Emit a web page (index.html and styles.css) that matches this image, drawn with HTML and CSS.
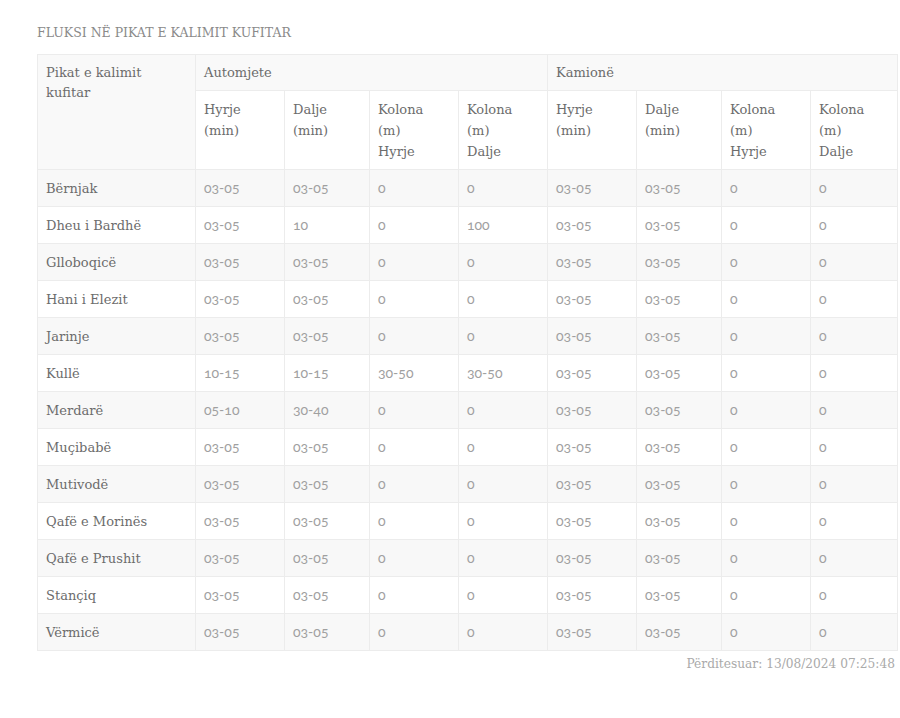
FILE: index.html
```html
<!DOCTYPE html>
<html lang="sq">
<head>
<meta charset="utf-8">
<title>Fluksi në pikat e kalimit kufitar</title>
<link rel="stylesheet" href="styles.css">
</head>
<body>
<div class="wrap">
  <h2 class="title">FLUKSI NË PIKAT E KALIMIT KUFITAR</h2>
  <table class="flux">
    <colgroup>
      <col class="c-name">
      <col class="c-a"><col class="c-b"><col class="c-a"><col class="c-a">
      <col class="c-a"><col class="c-b"><col class="c-a"><col class="c-c">
    </colgroup>
    <thead>
      <tr class="h1">
        <th rowspan="2" class="hname">Pikat e kalimit kufitar</th>
        <th colspan="4">Automjete</th>
        <th colspan="4">Kamionë</th>
      </tr>
      <tr class="h2">
        <th>Hyrje<br>(min)</th>
        <th>Dalje<br>(min)</th>
        <th>Kolona<br>(m)<br>Hyrje</th>
        <th>Kolona<br>(m)<br>Dalje</th>
        <th>Hyrje<br>(min)</th>
        <th>Dalje<br>(min)</th>
        <th>Kolona<br>(m)<br>Hyrje</th>
        <th>Kolona<br>(m)<br>Dalje</th>
      </tr>
    </thead>
    <tbody>
      <tr><th>Bërnjak</th><td>03-05</td><td>03-05</td><td>0</td><td>0</td><td>03-05</td><td>03-05</td><td>0</td><td>0</td></tr>
      <tr><th>Dheu i Bardhë</th><td>03-05</td><td>10</td><td>0</td><td>100</td><td>03-05</td><td>03-05</td><td>0</td><td>0</td></tr>
      <tr><th>Glloboqicë</th><td>03-05</td><td>03-05</td><td>0</td><td>0</td><td>03-05</td><td>03-05</td><td>0</td><td>0</td></tr>
      <tr><th>Hani i Elezit</th><td>03-05</td><td>03-05</td><td>0</td><td>0</td><td>03-05</td><td>03-05</td><td>0</td><td>0</td></tr>
      <tr><th>Jarinje</th><td>03-05</td><td>03-05</td><td>0</td><td>0</td><td>03-05</td><td>03-05</td><td>0</td><td>0</td></tr>
      <tr><th>Kullë</th><td>10-15</td><td>10-15</td><td>30-50</td><td>30-50</td><td>03-05</td><td>03-05</td><td>0</td><td>0</td></tr>
      <tr><th>Merdarë</th><td>05-10</td><td>30-40</td><td>0</td><td>0</td><td>03-05</td><td>03-05</td><td>0</td><td>0</td></tr>
      <tr><th>Muçibabë</th><td>03-05</td><td>03-05</td><td>0</td><td>0</td><td>03-05</td><td>03-05</td><td>0</td><td>0</td></tr>
      <tr><th>Mutivodë</th><td>03-05</td><td>03-05</td><td>0</td><td>0</td><td>03-05</td><td>03-05</td><td>0</td><td>0</td></tr>
      <tr><th>Qafë e Morinës</th><td>03-05</td><td>03-05</td><td>0</td><td>0</td><td>03-05</td><td>03-05</td><td>0</td><td>0</td></tr>
      <tr><th>Qafë e Prushit</th><td>03-05</td><td>03-05</td><td>0</td><td>0</td><td>03-05</td><td>03-05</td><td>0</td><td>0</td></tr>
      <tr><th>Stançiq</th><td>03-05</td><td>03-05</td><td>0</td><td>0</td><td>03-05</td><td>03-05</td><td>0</td><td>0</td></tr>
      <tr><th>Vërmicë</th><td>03-05</td><td>03-05</td><td>0</td><td>0</td><td>03-05</td><td>03-05</td><td>0</td><td>0</td></tr>
    </tbody>
  </table>
  <p class="updated">Përditesuar: 13/08/2024 07:25:48</p>
</div>
</body>
</html>
```
FILE: styles.css
```css
* { box-sizing: border-box; }
html, body { margin: 0; padding: 0; background: #fff; }
body {
  font-family: "DejaVu Serif", "Liberation Serif", serif;
  color: #777;
}
.wrap {
  padding: 23px 2px 0 37px;
}
.title {
  margin: 0 0 11px;
  font-size: 12.5px;
  line-height: 20px;
  font-weight: normal;
  color: #8a8a8a;
}
.flux {
  width: 861px;
  table-layout: fixed;
  border-collapse: collapse;
  border: 1px solid #e6e6e6;
}
.c-name { width: 158px; }
.c-a { width: 89px; }
.c-b { width: 85px; }
.c-c { width: 87px; }
.flux th, .flux td {
  border: 1px solid #ececec;
  padding: 8px 8px;
  line-height: 20px;
  text-align: left;
  vertical-align: top;
}
.flux th {
  font-family: "DejaVu Serif", "Liberation Serif", serif;
  font-size: 13px;
  font-weight: normal;
  color: #6c6c6c;
}
.flux .h1 th { background: #f9f9f9; padding-bottom: 7px; }
.flux .hname { padding-right: 20px; background: #f9f9f9; }
.flux .h2 th { line-height: 21px; padding-bottom: 7px; background: #fff; }
.flux tbody th { padding-top: 9px; padding-bottom: 7px; }
.flux td {
  font-family: "Lato", "Open Sans", sans-serif;
  font-size: 14px;
  font-variant-numeric: oldstyle-nums;
  color: #a0a0a0;
}
.flux tbody tr:nth-child(odd) th,
.flux tbody tr:nth-child(odd) td { background: #f8f8f8; }
.updated {
  margin: 4px 0 0;
  width: 861px;
  text-align: right;
  font-size: 12.2px;
  line-height: 18px;
  color: #aaa;
  padding-right: 3px;
}
```
